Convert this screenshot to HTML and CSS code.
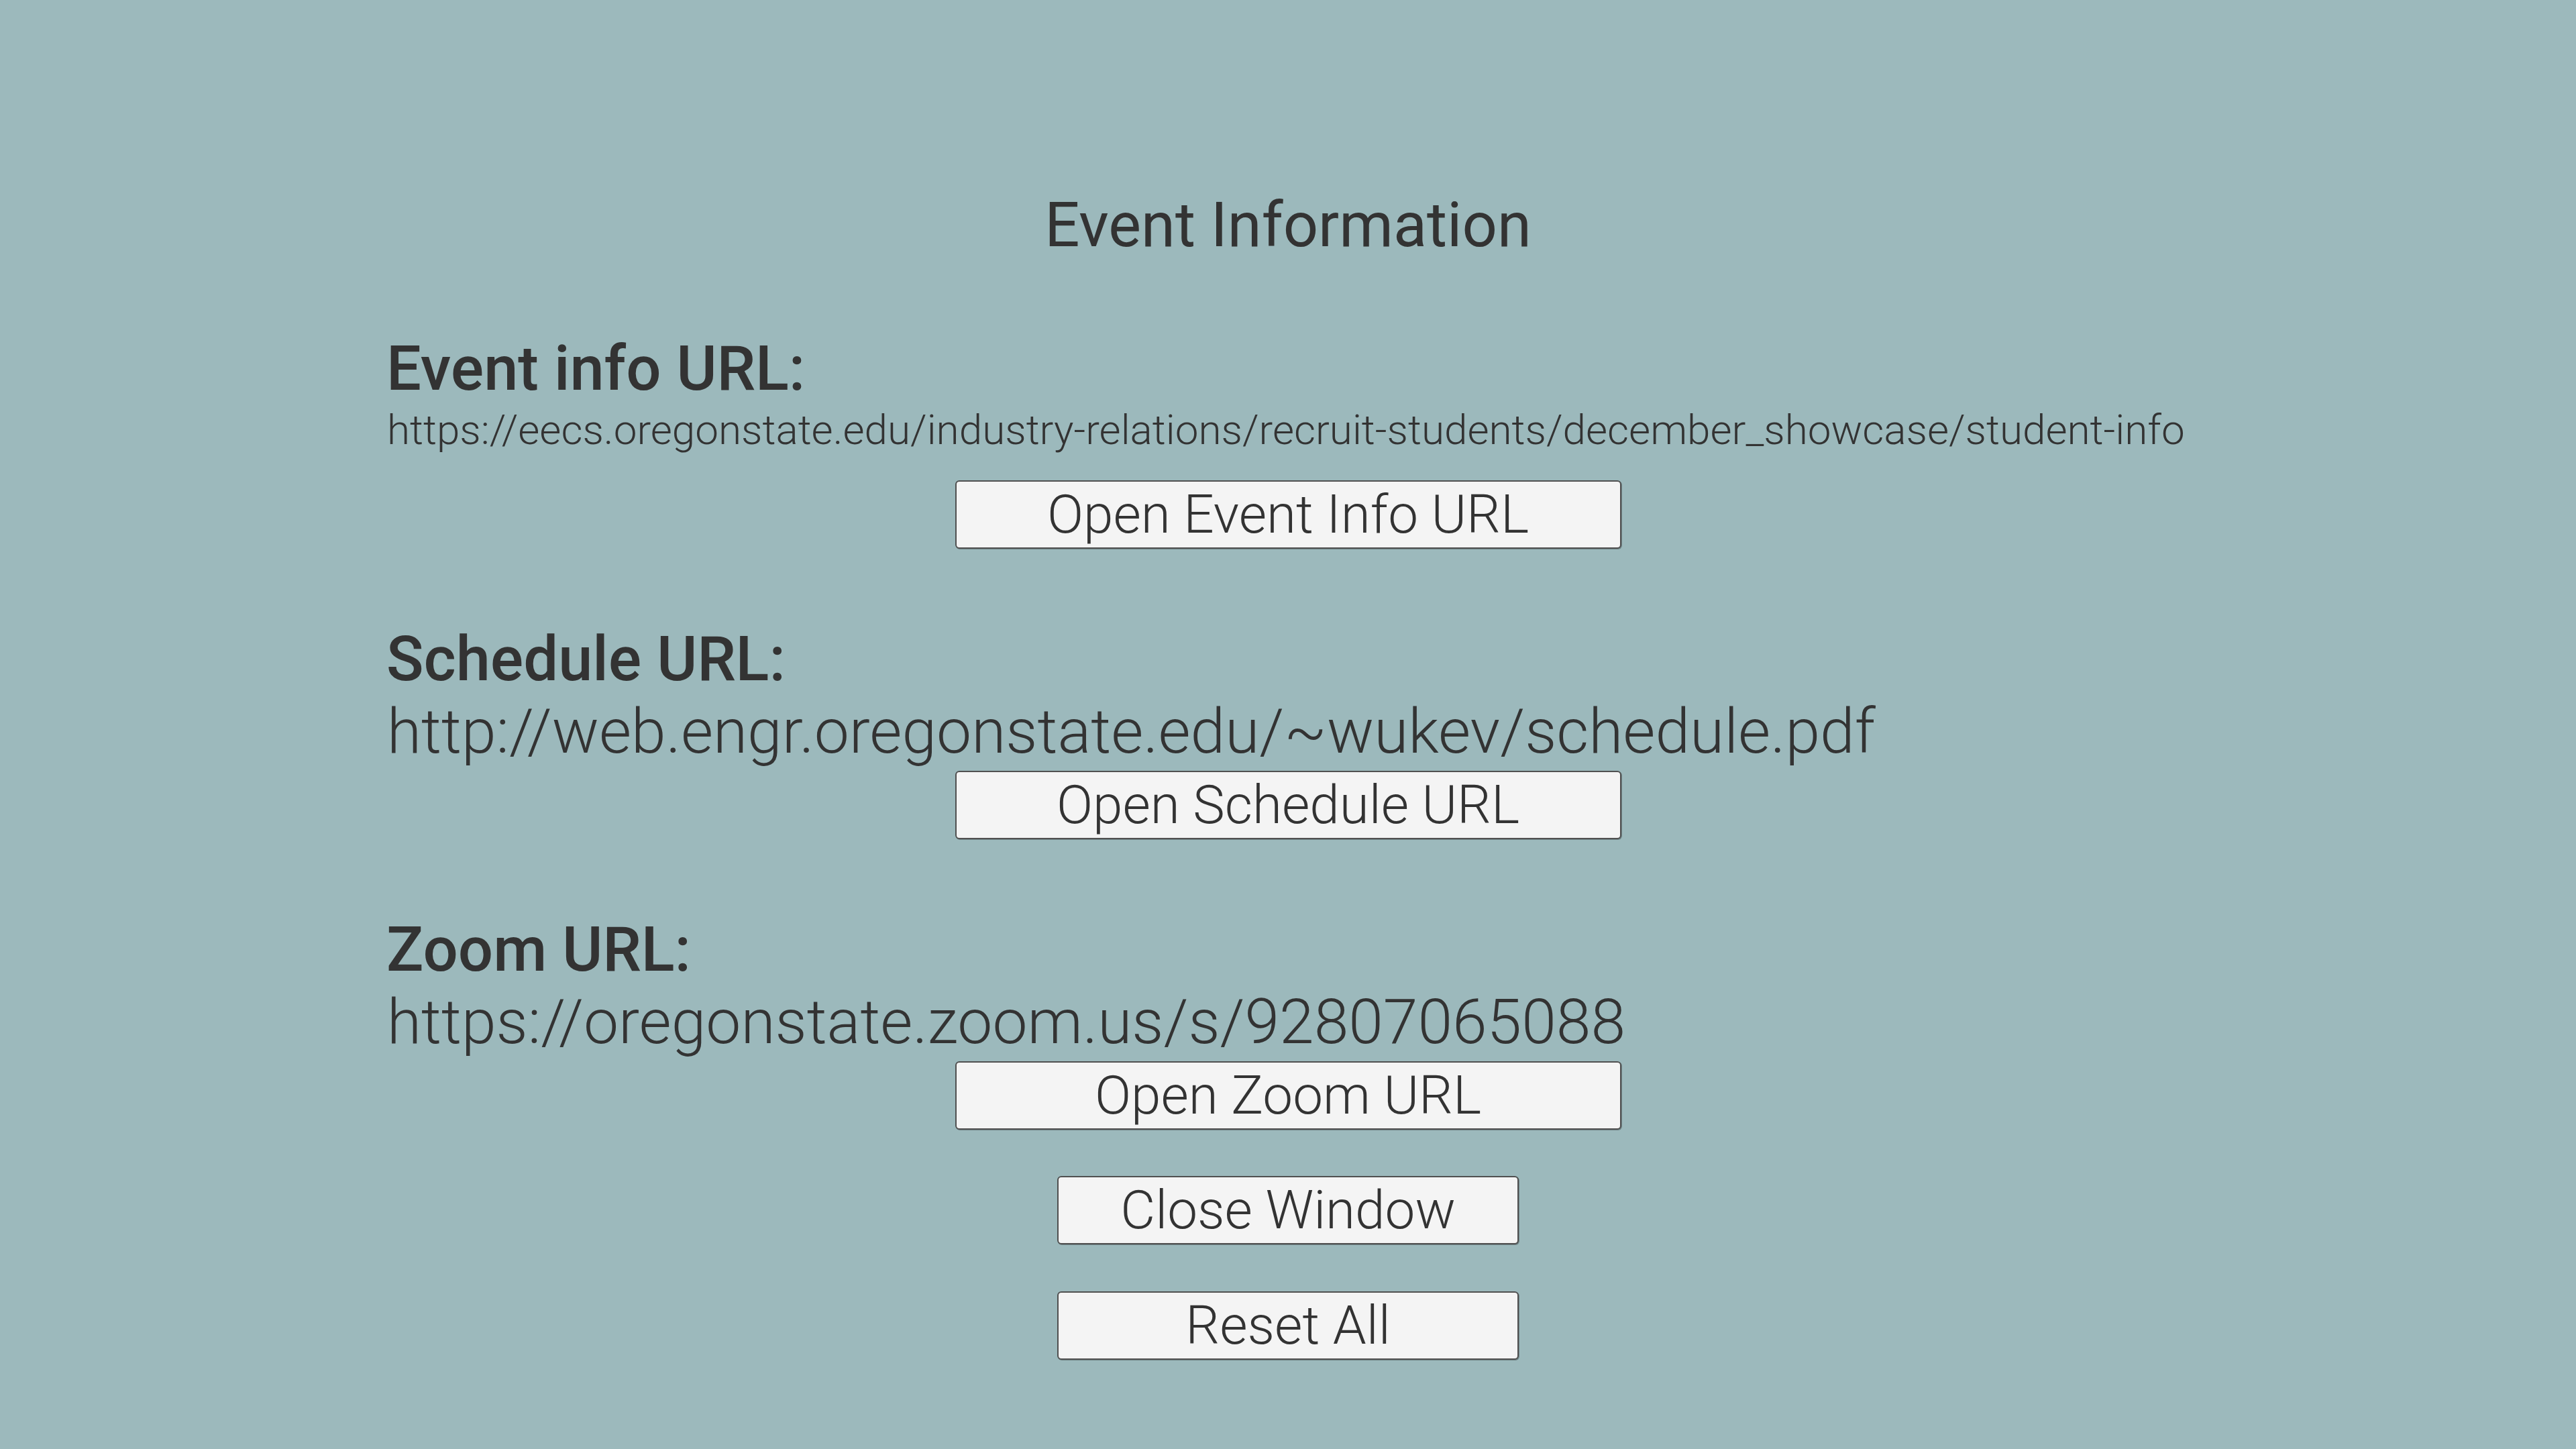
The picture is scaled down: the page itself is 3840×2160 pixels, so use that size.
FILE: index.html
```html
<!DOCTYPE html>
<html>
<head>
<meta charset="utf-8">
<title>Event Information</title>
<link rel="stylesheet" href="styles.css">
</head>
<body>
<main class="page">
  <h1 class="title">Event Information</h1>
  <section class="section">
    <div class="label">Event info URL:</div>
    <div class="url-row"><span class="url url-small">https://eecs.oregonstate.edu/industry-relations/recruit-students/december_showcase/student-info</span></div>
    <div class="btn-row"><button class="btn btn-wide">Open Event Info URL</button></div>
  </section>
  <section class="section">
    <div class="label">Schedule URL:</div>
    <div class="url-row"><span class="url">http://web.engr.oregonstate.edu/~wukev/schedule.pdf</span></div>
    <div class="btn-row"><button class="btn btn-wide">Open Schedule URL</button></div>
  </section>
  <section class="section">
    <div class="label">Zoom URL:</div>
    <div class="url-row"><span class="url">https://oregonstate.zoom.us/s/92807065088</span></div>
    <div class="btn-row"><button class="btn btn-wide">Open Zoom URL</button></div>
  </section>
  <div class="actions">
    <button class="btn btn-narrow">Close Window</button>
    <button class="btn btn-narrow">Reset All</button>
  </div>
</main>
</body>
</html>
```
FILE: styles.css
```css
html, body {
  margin: 0;
  padding: 0;
}
body {
  width: 3840px;
  height: 2160px;
  background: #9cb9bc;
  color: #333333;
  font-family: Roboto, "Liberation Sans", sans-serif;
  overflow: hidden;
}
.page {
  display: flex;
  flex-direction: column;
  padding-top: 282px;
}
.title {
  margin: 0;
  font-size: 92px;
  font-weight: 400;
  line-height: 108px;
  text-align: center;
  margin-bottom: 106px;
}
.section {
  display: flex;
  flex-direction: column;
  margin-bottom: 111px;
}
.label {
  padding-left: 576px;
  font-family: "Roboto Medium", Roboto, "Liberation Sans", sans-serif;
  font-size: 92px;
  font-weight: 500;
  line-height: 108px;
}
.url-row {
  padding-left: 577px;
  height: 112px;
}
.url {
  display: block;
  font-size: 93px;
  font-weight: 300;
  line-height: 108px;
  white-space: nowrap;
}
.url-small {
  font-size: 62px;
  line-height: 73px;
}
.btn-row {
  display: flex;
  justify-content: center;
}
.btn {
  box-sizing: border-box;
  height: 102px;
  padding: 0;
  background: #f4f4f4;
  border: 2px solid #505050;
  border-radius: 6px;
  box-shadow: 1px 1px 0 #6f8385;
  color: #333333;
  font-family: Roboto, "Liberation Sans", sans-serif;
  font-size: 80px;
  font-weight: 300;
  line-height: 96px;
  display: flex;
  align-items: center;
  justify-content: center;
}
.btn-wide {
  width: 993px;
}
.btn-narrow {
  width: 688px;
}
.actions {
  margin-top: -42px;
  display: flex;
  flex-direction: column;
  align-items: center;
  gap: 70px;
}
```
